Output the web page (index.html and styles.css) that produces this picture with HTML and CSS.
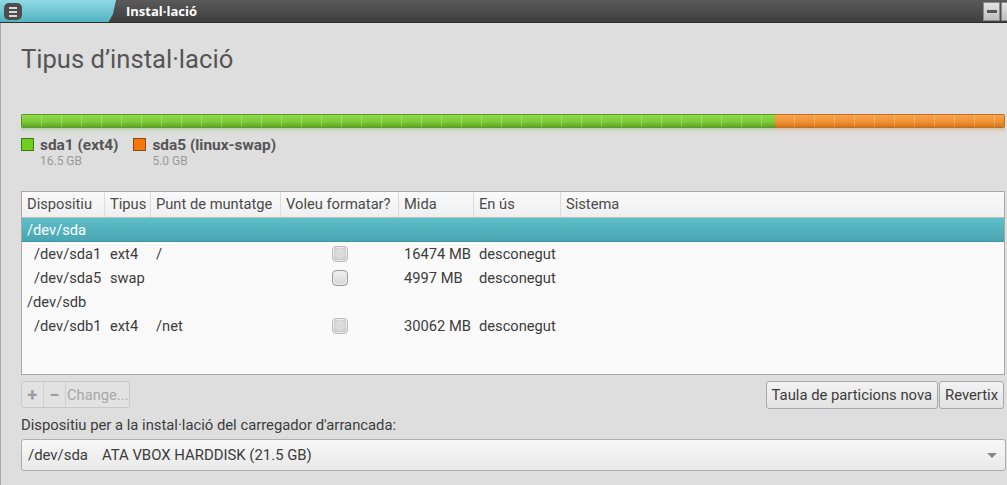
FILE: index.html
```html
<!DOCTYPE html>
<html>
<head>
<meta charset="utf-8">
<link rel="stylesheet" href="styles.css">
</head>
<body>
<div class="window">
  <div class="titlebar">
    <div class="tab">
      <div class="menu-btn"><span></span><span></span><span></span></div>
    </div>
    <div class="title">Instal·lació</div>
    <div class="ctrls">
      <div class="ctrl"><span></span></div>
      <div class="ctrl ctrl-cut"></div>
    </div>
  </div>
  <div class="content">
    <h1 class="heading">Tipus d’instal·lació</h1>
    <div class="bar-wrap">
      <div class="bar">
        <div class="seg green" style="width:754px"></div>
        <div class="seg orange"></div>
      </div>
      <div class="bar refl">
        <div class="seg green" style="width:754px"></div>
        <div class="seg orange"></div>
      </div>
    </div>
    <div class="legend">
      <div class="leg">
        <div class="sw sw-green"></div>
        <div>
          <div class="leg-name">sda1 (ext4)</div>
          <div class="leg-size">16.5 GB</div>
        </div>
      </div>
      <div class="leg">
        <div class="sw sw-orange"></div>
        <div>
          <div class="leg-name">sda5 (linux-swap)</div>
          <div class="leg-size">5.0 GB</div>
        </div>
      </div>
    </div>
    <div class="table">
      <div class="row head">
        <div class="c c1">Dispositiu</div>
        <div class="c c2">Tipus</div>
        <div class="c c3">Punt de muntatge</div>
        <div class="c c4">Voleu formatar?</div>
        <div class="c c5">Mida</div>
        <div class="c c6">En ús</div>
        <div class="c c7">Sistema</div>
      </div>
      <div class="row sel"><div class="c">/dev/sda</div></div>
      <div class="row">
        <div class="c c1 ind">/dev/sda1</div>
        <div class="c c2">ext4</div>
        <div class="c c3">/</div>
        <div class="c c4 chk"><span class="cb"></span></div>
        <div class="c c5">16474 MB</div>
        <div class="c c6">desconegut</div>
        <div class="c c7"></div>
      </div>
      <div class="row">
        <div class="c c1 ind">/dev/sda5</div>
        <div class="c c2">swap</div>
        <div class="c c3"></div>
        <div class="c c4 chk"><span class="cb cb2"></span></div>
        <div class="c c5">4997 MB</div>
        <div class="c c6">desconegut</div>
        <div class="c c7"></div>
      </div>
      <div class="row"><div class="c">/dev/sdb</div></div>
      <div class="row">
        <div class="c c1 ind">/dev/sdb1</div>
        <div class="c c2">ext4</div>
        <div class="c c3">/net</div>
        <div class="c c4 chk"><span class="cb"></span></div>
        <div class="c c5">30062 MB</div>
        <div class="c c6">desconegut</div>
        <div class="c c7"></div>
      </div>
    </div>
    <div class="toolbar">
      <div class="btngroup">
        <div class="tb tb-icon">+</div>
        <div class="tb tb-icon">−</div>
        <div class="tb tb-text">Change...</div>
      </div>
      <div class="right-btns">
        <div class="btn">Taula de particions nova</div>
        <div class="btn">Revertix</div>
      </div>
    </div>
    <div class="boot-label">Dispositiu per a la instal·lació del carregador d'arrancada:</div>
    <div class="combo">
      <span class="combo-text"><span class="dev">/dev/sda</span>ATA VBOX HARDDISK (21.5 GB)</span>
      <span class="arrow"></span>
    </div>
  </div>
</div>
</body>
</html>
```

FILE: styles.css
```css
* { box-sizing: border-box; }
html, body { margin: 0; padding: 0; }
body {
  width: 1007px;
  height: 485px;
  overflow: hidden;
  background: #dedede;
  font-family: Roboto, "Liberation Sans", sans-serif;
  color: #3c3c3c;
}
.window {
  height: 485px;
  border-left: 1px solid #a9a9a9;
  background: #dedede;
}
.titlebar {
  height: 23px;
  display: flex;
  align-items: stretch;
  background: linear-gradient(#5a5a5a, #3e3e3e);
  border-bottom: 1px solid #2f2f2f;
  margin-left: -1px;
}
.tab {
  width: 116px;
  background: linear-gradient(#8fdbe4, #52b3c2);
  clip-path: polygon(0 0, 116px 0, 113px 14px, 108px 23px, 0 23px);
  padding: 3px 0 0 4px;
}
.menu-btn {
  width: 18px;
  height: 17px;
  background: #4c4c4c;
  border-radius: 5px;
  display: flex;
  flex-direction: column;
  justify-content: center;
  gap: 2px;
  padding-left: 5px;
}
.menu-btn span {
  width: 8px;
  height: 2px;
  background: #d8d8d8;
}
.title {
  color: #fff;
  font-weight: bold;
  font-size: 13px;
  padding-left: 10px;
  line-height: 23px;
  flex: 1;
  font-family: "Open Sans", Roboto, sans-serif;
}
.ctrls {
  display: flex;
  align-items: flex-start;
  padding-top: 2px;
  gap: 1px;
}
.ctrl {
  width: 17px;
  height: 19px;
  background: linear-gradient(#e4e4e4, #bdbdbd);
  border: 1px solid #8a8a8a;
  display: flex;
  align-items: center;
  justify-content: center;
}
.ctrl span {
  width: 10px;
  height: 3px;
  background: #555;
}
.ctrl-cut { width: 6px; border-right: none; }
.content {
  padding: 0 0 0 20px;
}
.heading {
  margin: 0;
  padding-top: 20px;
  height: 91px;
  font-size: 25.6px;
  font-weight: normal;
  color: #555;
  line-height: 32px;
}
.bar-wrap {
  width: 984px;
  height: 22px;
}
.bar {
  height: 14px;
  display: flex;
  border-radius: 2px;
  overflow: hidden;
}
.seg { height: 100%; }
.green {
  background:
    repeating-linear-gradient(90deg, transparent 0 19px, rgba(255,255,255,0.25) 19px 20px),
    linear-gradient(#92d84c, #7dcb35 55%, #5fa526);
  border: 1px solid #5a9a2a;
  border-right: none;
}
.orange {
  flex: 1;
  background:
    repeating-linear-gradient(90deg, transparent 0 19px, rgba(255,255,255,0.25) 19px 20px),
    linear-gradient(#f8a450, #f09233 55%, #d2761d);
  border: 1px solid #c07020;
  border-left: none;
}
.refl {
  height: 6px;
  transform: scaleY(-1);
  opacity: 0.25;
  -webkit-mask-image: linear-gradient(to top, #000, transparent);
  mask-image: linear-gradient(to top, #000, transparent);
  border-radius: 0;
}
.legend {
  display: flex;
  gap: 15px;
  height: 55px;
  padding-top: 1px;
}
.leg { display: flex; gap: 6px; }
.sw {
  width: 13px;
  height: 13px;
  margin-top: 1px;
  border: 1px solid #555;
}
.sw-green { background: #6ed01a; border-color: #3f7a10; }
.sw-orange { background: #f7770f; border-color: #8a4a10; }
.leg-name {
  font-weight: bold;
  font-size: 15.4px;
  color: #555;
  line-height: 16px;
}
.leg-size {
  font-size: 12px;
  color: #9a9a9a;
  line-height: 14px;
  padding-top: 1px;
}
.table {
  width: 984px;
  height: 184px;
  background: #fafafa;
  border: 1px solid #a8a8a8;
  font-size: 14.7px;
  color: #3c3c3c;
}
.row {
  display: flex;
  height: 24px;
  line-height: 24px;
}
.row .c { padding-left: 5px; white-space: nowrap; }
.row.head {
  height: 26px;
  line-height: 25px;
  background: linear-gradient(#fbfbfb, #efefef);
  border-bottom: 1px solid #bdbdbd;
  color: #4a4a4a;
}
.head .c { border-right: 1px solid #dcdcdc; }
.head .c7 { border-right: none; flex: 1; }
.c1 { width: 83px; }
.c2 { width: 46px; }
.c3 { width: 130px; }
.c4 { width: 118px; }
.c5 { width: 75px; }
.c6 { width: 87px; }
.c7 { flex: 1; }
.row .ind { padding-left: 12px; }
.row.sel {
  background: linear-gradient(#5dbec9, #4aa6b2);
  color: #fff;
  border-bottom: 1px solid #3f97a2;
}
.chk { display: flex; align-items: center; padding-left: 51px !important; }
.cb {
  width: 16px;
  height: 16px;
  border-radius: 4px;
  background: radial-gradient(circle at 50% 45%, #dcdcdc 40%, #c4c4c4 75%);
  border: 1px solid #bcbcbc;
  box-shadow: inset 0 0 0 1px #ececec;
}
.cb2 {
  background: linear-gradient(#f1f1f1, #d6d6d6);
  border-color: #9c9c9c;
}
.toolbar {
  display: flex;
  justify-content: space-between;
  width: 984px;
  padding-top: 6px;
  height: 40px;
}
.btngroup {
  display: flex;
  height: 27px;
  border: 1px solid #c8c8c8;
  border-radius: 3px;
  background: #e2e2e2;
  color: #a8a8a8;
  font-size: 14.7px;
}
.tb {
  display: flex;
  align-items: center;
  justify-content: center;
  border-right: 1px solid #cecece;
}
.tb-icon { width: 22px; font-size: 18px; font-weight: bold; color: #9d9d9d; }
.tb-text { padding: 0 1px 0 1px; border-right: none; }
.right-btns { display: flex; gap: 1px; padding-right: 1px; }
.btn {
  height: 28px;
  line-height: 26px;
  padding: 0 5px;
  border: 1px solid #a8a8a8;
  border-radius: 3px;
  background: linear-gradient(#f3f3f3, #e2e2e2);
  font-size: 14.8px;
  color: #3c3c3c;
}
.boot-label {
  font-size: 14.8px;
  color: #3c3c3c;
  height: 24px;
  line-height: 20px;
}
.combo {
  width: 985px;
  height: 32px;
  border: 1px solid #b0b0b0;
  border-radius: 3px;
  background: linear-gradient(#f8f8f8, #e9e9e9);
  display: flex;
  align-items: center;
  justify-content: space-between;
  padding: 0 8px 0 6px;
  font-size: 14.9px;
  color: #3c3c3c;
}
.dev { margin-right: 14px; }
.arrow {
  width: 0;
  height: 0;
  border-left: 5px solid transparent;
  border-right: 5px solid transparent;
  border-top: 5px solid #888;
}
```
